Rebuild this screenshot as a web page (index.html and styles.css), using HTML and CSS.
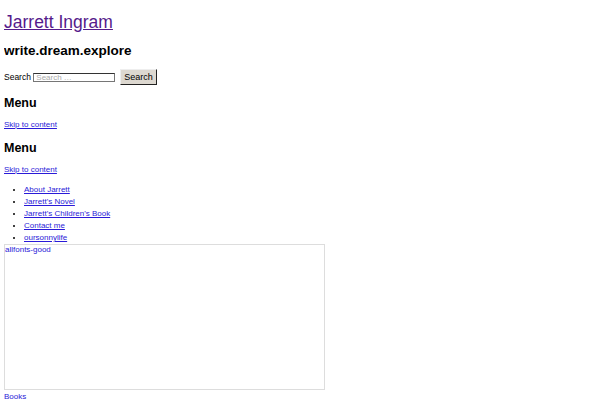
FILE: index.html
```html
<!DOCTYPE html>
<html>
<head>
  <meta charset="UTF-8" />
  <title>Jarrett Ingram</title>
  <link rel="stylesheet" href="styles.css">
</head>
<body>
  <header class="site-header">
    <h1 class="site-title"><a href="#" class="visited">Jarrett Ingram</a></h1>
    <h2 class="site-description">write.dream.explore</h2>
    <form class="search-form">
      <label>Search <input type="search" class="search-field" placeholder="Search …" /></label>
      <button type="button" class="search-submit">Search</button>
    </form>
  </header>

  <nav class="menu-block">
    <h3 class="menu-toggle">Menu</h3>
    <a href="#" class="skip-link">Skip to content</a>
  </nav>

  <nav class="menu-block">
    <h3 class="menu-toggle">Menu</h3>
    <a href="#" class="skip-link">Skip to content</a>
    <ul class="menu">
      <li><a href="#">About Jarrett</a></li>
      <li><a href="#">Jarrett's Novel</a></li>
      <li><a href="#">Jarrett's Children's Book</a></li>
      <li><a href="#">Contact me</a></li>
      <li><a href="#">oursonnylife</a></li>
    </ul>
  </nav>

  <div class="banner">
    <span class="alt-text">allfonts-good</span>
  </div>
  <a href="#" class="cat-link">Books</a>
</body>
</html>
```

FILE: styles.css
```css
body {
  font-family: "Liberation Sans", Arial, sans-serif;
  margin: 4px;
  color: #000;
  font-size: 8px;
}
a {
  color: #2a1ad8;
}
a.visited {
  color: #551a8b;
}
.site-title {
  font-size: 17.5px;
  font-weight: normal;
  margin: 8px 0 0;
  line-height: 20px;
}
.site-description {
  font-size: 13.5px;
  margin: 11px 0 0;
  line-height: 16px;
}
.search-form {
  margin-top: 10px;
  display: flex;
  align-items: center;
  gap: 5px;
}
.search-form label {
  font-size: 8.5px;
}
.search-field {
  width: 82px;
  height: 9px;
  font-size: 8px;
  padding: 1px 2px;
  border: 1px solid #767676;
  border-top-color: #333;
  font-family: inherit;
}
.search-field::placeholder {
  color: #aaa;
}
.search-submit {
  font-family: inherit;
  font-size: 9px;
  padding: 2px 3px;
  background: #ddd8d0;
  border: 1px solid #222;
  border-top-color: #eee;
  border-left-color: #eee;
}
.menu-toggle {
  font-size: 12.5px;
  font-weight: bold;
  line-height: 15px;
  margin: 11px 0 9px;
}
.skip-link {
  display: block;
  line-height: 10px;
}
.menu {
  margin: 9px 0 0;
  padding-left: 20px;
  line-height: 12px;
}
.banner {
  width: 319px;
  height: 144px;
  border: 1px solid #ddd;
  color: #2a1ad8;
  line-height: 10px;
}
.cat-link {
  display: block;
  margin-top: 2px;
}
```
